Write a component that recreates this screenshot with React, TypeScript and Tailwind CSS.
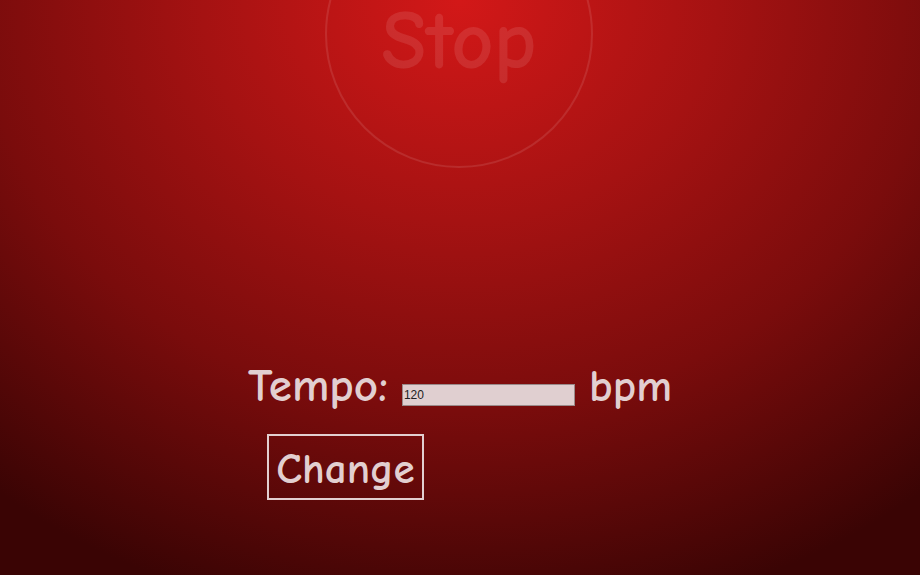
export default function App() {
  const font = { fontFamily: '"Comic Sans MS", "Comic Neue", Lato, sans-serif' };
  return (
    <div
      className="h-[575px] w-[920px] overflow-hidden bg-[radial-gradient(ellipse_80%_110%_at_50%_0%,#d31818_0%,#a51212_35%,#7a0c0c_65%,#3a0404_100%)] text-[#e2cfd0]"
      style={font}
    >
      <div className="flex flex-col items-center">
        {/* play/stop */}
        <button className="ml-[-2px] mt-[-100px] flex h-[268px] w-[268px] items-end justify-center rounded-full border-2 border-white/10 pb-[96px]">
          <span className="block text-[82px] font-bold leading-[0.7] text-white/10">Stop</span>
        </button>

        <div className="mt-[192px] flex w-[424px] flex-col">
          <div className="flex items-center">
            <span className="text-[47px] font-bold leading-[52px]">Tempo:</span>
            <input
              defaultValue="120"
              className="ml-[14px] mt-[18px] h-[22px] w-[174px] border border-[#9a8a8a] bg-[#e0cfd0] px-[1px] text-[12px] text-[#222]"
              style={{ fontFamily: 'Arial, "Liberation Sans", sans-serif' }}
            />
            <span className="ml-[14px] text-[45px] font-bold leading-[52px]">bpm</span>
          </div>
          <button className="ml-[19px] mt-[22px] h-[66px] w-[157px] border-2 border-[#e2cfd0] pt-[4px] text-[43px] font-bold leading-none">
            Change
          </button>
        </div>
      </div>
    </div>
  );
}
